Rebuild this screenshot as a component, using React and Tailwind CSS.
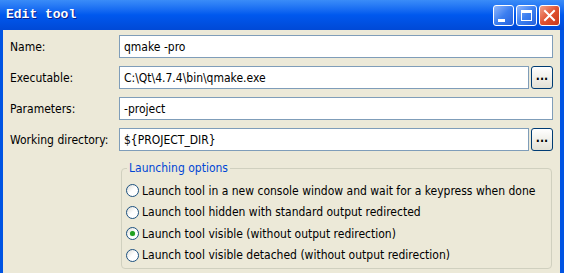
import React from "react";

const font = { fontFamily: '"DejaVu Sans Condensed", "DejaVu Sans", sans-serif' };

function Radio({ checked, label }) {
  return (
    <div className="flex items-center h-[21px]">
      <div className="w-[13px] h-[13px] rounded-full border border-[#1c5180] bg-gradient-to-br from-[#dcdcd6] via-white to-white flex items-center justify-center ml-[3px] mr-[3px]">
        {checked && <div className="w-[5px] h-[5px] rounded-full bg-[#21a121] shadow-[0_0_1px_#7fd17f]" />}
      </div>
      <span className="text-[12px] text-black">{label}</span>
    </div>
  );
}

function Input({ value }) {
  return (
    <div className="flex-1 h-[23px] border border-[#7f9db9] bg-white flex items-center px-[4px] text-[12px] text-black">
      {value}
    </div>
  );
}

function Browse() {
  return (
    <div className="w-[22px] h-[23px] ml-[2px] rounded-[3px] border border-[#003c74] bg-gradient-to-b from-white to-[#e3e1d6] flex items-center justify-center text-[12px] font-bold leading-none pb-[3px] text-black">
      ...
    </div>
  );
}

function Row({ label, value, browse }) {
  return (
    <div className="flex items-center h-[23px]">
      <div className="w-[109px] text-[12px] text-black">{label}</div>
      <Input value={value} />
      {browse && <Browse />}
    </div>
  );
}

function CapBtn({ kind }) {
  const base =
    "w-[21px] h-[21px] rounded-[3px] border border-white flex items-center justify-center";
  if (kind === "close") {
    return (
      <div className={base + " bg-gradient-to-br from-[#f0a08a] via-[#e0512f] to-[#c9381a]"}>
        <svg width="13" height="13" viewBox="0 0 13 13">
          <path d="M2 2 L11 11 M11 2 L2 11" stroke="white" strokeWidth="2" strokeLinecap="square" />
        </svg>
      </div>
    );
  }
  return (
    <div className={base + " bg-gradient-to-br from-[#8fb6fb] via-[#3c7ff0] to-[#2660dd]"}>
      {kind === "min" ? (
        <div className="w-[7px] h-[3px] bg-white mt-[9px] mr-[5px]" />
      ) : (
        <div className="w-[11px] h-[11px] border border-white border-t-[3px]" />
      )}
    </div>
  );
}

export default function App() {
  return (
    <div className="w-[564px] h-[273px] overflow-hidden flex flex-col bg-[#0054e3]" style={font}>
      <div className="h-[30px] flex items-center justify-between bg-gradient-to-b from-[#3a8cf8] via-[#0058ee] to-[#0049d6] pl-[6px] pr-[4px]">
        <span
          className="text-white font-bold text-[13px] [text-shadow:1px_1px_0_#0a1e8c]"
          style={{ fontFamily: '"Liberation Mono", monospace' }}
        >
          Edit tool
        </span>
        <div className="flex gap-[2px] mt-[1px]">
          <CapBtn kind="min" />
          <CapBtn kind="max" />
          <CapBtn kind="close" />
        </div>
      </div>
      <div className="flex-1 mx-[3px] mr-[4px] bg-[#ece9d8] pl-[7px] pr-[7px] pt-[5px] flex flex-col">
        <div className="flex flex-col gap-[8px]">
          <Row label="Name:" value="qmake -pro" />
          <Row label="Executable:" value="C:\Qt\4.7.4\bin\qmake.exe" browse />
          <Row label="Parameters:" value="-project" />
          <Row label="Working directory:" value="${PROJECT_DIR}" browse />
        </div>
        <fieldset className="ml-[111px] mr-[1px] mt-[8px] border border-[#d0d0bf] rounded-[4px] pl-[1px] pb-[2px]">
          <legend className="ml-[4px] px-[2px] text-[12px] text-[#0046d5]">Launching options</legend>
          <div className="flex flex-col mt-[3px] gap-[0.5px]">
            <Radio label="Launch tool in a new console window and wait for a keypress when done" />
            <Radio label="Launch tool hidden with standard output redirected" />
            <Radio checked label="Launch tool visible (without output redirection)" />
            <Radio label="Launch tool visible detached (without output redirection)" />
          </div>
        </fieldset>
      </div>
    </div>
  );
}
